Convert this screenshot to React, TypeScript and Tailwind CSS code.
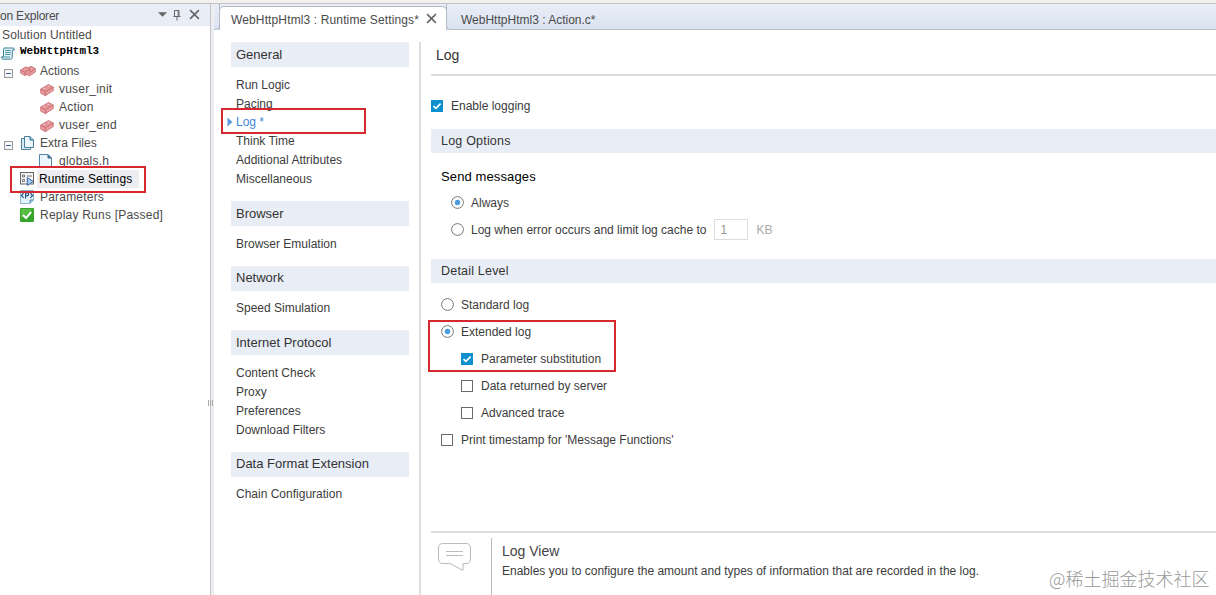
import React from "react";

const ROW = "flex h-[18px] items-center whitespace-nowrap text-[12px] text-[#4a4a4a]";

function Brick() {
  return (
    <svg width="14" height="14" viewBox="0 0 14 14" className="shrink-0">
      <path d="M0.5 6.2 L8.5 1.5 L13.3 4 L13.3 7.5 L5.4 12.7 L0.8 10.2 Z" fill="#ea9b9d" stroke="#c76f74" strokeWidth="0.8" />
      <path d="M0.6 6.3 L5.4 8.7 L13.2 4.1 M5.4 8.7 V12.6" fill="none" stroke="#c0636a" strokeWidth="0.8" />
      <ellipse cx="4.6" cy="5.4" rx="1.8" ry="1.1" fill="#f6c2c2" stroke="#c76f74" strokeWidth="0.6" />
      <ellipse cx="8.6" cy="3.4" rx="1.8" ry="1.1" fill="#f6c2c2" stroke="#c76f74" strokeWidth="0.6" />
    </svg>
  );
}

function Bricks() {
  return (
    <svg width="16" height="13" viewBox="0 0 16 13" className="shrink-0">
      <path d="M6 3.8 L11 1.2 L15.3 3.5 V7 L9.5 11 L6 9Z" fill="#ea9b9d" stroke="#c76f74" strokeWidth="0.8" />
      <path d="M0.5 5 L6 1.8 L10 4 V7.5 L5 10.6 L0.6 8.2Z" fill="#ea9b9d" stroke="#c76f74" strokeWidth="0.8" />
      <path d="M0.6 5.1 L5 7.3 L10 4.1 M5 7.3 V10.5 M10 7.5 L15 3.6" fill="none" stroke="#c0636a" strokeWidth="0.8" />
      <ellipse cx="4.6" cy="4.2" rx="1.6" ry="1" fill="#f6c2c2" stroke="#c76f74" strokeWidth="0.6" />
      <ellipse cx="11.4" cy="3.4" rx="1.5" ry="1" fill="#f6c2c2" stroke="#c76f74" strokeWidth="0.6" />
    </svg>
  );
}

function Minus() {
  return (
    <svg width="9" height="9" viewBox="0 0 9 9" className="mt-[4px] shrink-0">
      <rect x="0.5" y="0.5" width="8" height="8" fill="#f7f7f7" stroke="#999" />
      <path d="M2 4.5H7" stroke="#4661a8" />
    </svg>
  );
}

function Scroll() {
  return (
    <svg width="14" height="13" viewBox="0 0 14 13" className="shrink-0">
      <path d="M3 1 H12.2 Q13.5 1 13.3 3 H11.3 V10 Q11.2 12.2 9.5 12.2 H1.5 Q0.3 11.8 0.6 9.8 H2.5 V2.8 Q2.4 1.2 3.6 1" fill="#e2f2f5" stroke="#3c8397" />
      <path d="M4.2 3.5H9.6 M4.2 5.5H9.6 M4.2 7.5H9.6 M1 10H9" stroke="#4b94a6" />
    </svg>
  );
}

function Doc() {
  return (
    <svg width="13" height="14" viewBox="0 0 13 14" className="shrink-0">
      <path d="M0.5 0.5H9L12.5 4V13.5H0.5Z" fill="#eaf5fc" stroke="#5586a3" />
      <path d="M9 0.5V4H12.5" fill="#356f98" stroke="#39718f" />
    </svg>
  );
}

function Docs() {
  return (
    <svg width="13" height="14" viewBox="0 0 13 14" className="shrink-0">
      <path d="M3 2.5H0.5V13.5H9.5V12" fill="#d8ecf6" stroke="#4c809d" />
      <path d="M3.5 0.5H9L12.5 4V11.5H3.5Z" fill="#eaf5fc" stroke="#4c809d" />
      <path d="M9 0.5V4H12.5" fill="#8ec1dc" stroke="#39718f" />
    </svg>
  );
}

function RuntimeIcon() {
  return (
    <svg width="14" height="14" viewBox="0 0 14 14" className="shrink-0">
      <rect x="0.5" y="0.5" width="13" height="11.5" fill="#f4f4f4" stroke="#666" />
      <path d="M2.5 3H4.5V5H2.5Z M2.5 7.5H4.5V9.5H2.5Z" fill="#fff" stroke="#666" strokeWidth="0.9" />
      <path d="M7 4H12" stroke="#777" />
      <path d="M7.3 5.5 L13.2 9.5 L7.3 13.5Z" fill="#a9ccf1" stroke="#3567a8" />
    </svg>
  );
}

function ParamIcon() {
  return (
    <svg width="14" height="14" viewBox="0 0 14 14" className="shrink-0">
      <path d="M0.5 0.5H13.5V10L10 13.5H0.5Z" fill="#e3f1fa" stroke="#8ab6d0" />
      <path d="M3.6 3.2 L1.4 5.5 L3.6 7.8 M10.4 3.2 L12.6 5.5 L10.4 7.8 M5.6 8.6V3H7.2Q8.6 3.1 8.6 4.4Q8.5 5.8 7 5.8H5.6" fill="none" stroke="#174a7a" strokeWidth="1.1" />
      <path d="M10 13.3V10H13.3" fill="#95c4df" stroke="#5290b5" />
    </svg>
  );
}

function Passed() {
  return (
    <svg width="14" height="14" viewBox="0 0 14 14" className="shrink-0">
      <rect width="14" height="14" rx="1" fill="#35a52b" />
      <path d="M1 1H13L1 11Z" fill="#58bd43" />
      <path d="M3 7 L6 10 L11.2 4" fill="none" stroke="#fff" strokeWidth="2" />
    </svg>
  );
}

function Close({ size, color }: { size: number; color: string }) {
  return (
    <svg width={size} height={size} viewBox="0 0 10 10" className="shrink-0">
      <path d="M1 1L9 9M9 1L1 9" stroke={color} strokeWidth="1.4" />
    </svg>
  );
}

function Checkbox({ checked = false }: { checked?: boolean }) {
  return (
    <svg width="12" height="12" viewBox="0 0 12 12" className="shrink-0">
      {checked ? (
        <>
          <rect width="12" height="12" fill="#0e90cf" />
          <path d="M2.5 6.2L4.9 8.4L9.6 3.6" fill="none" stroke="#fff" strokeWidth="1.7" />
        </>
      ) : (
        <rect x="0.5" y="0.5" width="11" height="11" fill="#fff" stroke="#6b6b6b" />
      )}
    </svg>
  );
}

function Radio({ checked = false }: { checked?: boolean }) {
  return (
    <svg width="13" height="13" viewBox="0 0 13 13" className="shrink-0">
      <circle cx="6.5" cy="6.5" r="5.9" fill="#fff" stroke="#777" strokeWidth="1" />
      {checked && <circle cx="6.5" cy="6.5" r="2.7" fill="#4a9be0" />}
    </svg>
  );
}

function Explorer() {
  return (
    <aside className="relative w-[210px] shrink-0 overflow-hidden bg-white">
      <header className="flex h-[22px] items-center bg-[#e9edf6] text-[12px] text-[#4a4a4a]">
        <span className="mt-px w-[158px] whitespace-nowrap tracking-[-0.2px]">on Explorer</span>
        <svg width="9" height="5" viewBox="0 0 9 5" className="-mt-px"><path d="M0 0.3H9L4.5 4.8Z" fill="#666" /></svg>
        <svg width="8" height="11" viewBox="0 0 8 11" className="ml-[6px]">
          <path d="M1.5 6.5V0.5H6V6.5M0.5 6.5H7.5M4 6.5V10.5M5.2 1V6" fill="none" stroke="#666" />
        </svg>
        <span className="-mt-px ml-[8px]"><Close size={11} color="#666" /></span>
      </header>
      <div className={`${ROW} pl-[2px] tracking-[0.15px]`}>Solution Untitled</div>
      <div className={`${ROW} pl-px`}>
        <Scroll />
        <span className="ml-[5px] -mt-[3px] font-['Liberation_Mono',monospace] text-[11px] font-bold text-black">WebHttpHtml3</span>
      </div>
      <div className={`${ROW} pl-[4px]`}><Minus /><span className="w-[7px]" /><Bricks /><span className="ml-[4px]">Actions</span></div>
      {["vuser_init", "Action", "vuser_end"].map((t) => (
        <div key={t} className={`${ROW} pl-[40px]`}><span className="mt-[2px]"><Brick /></span><span className="ml-[5px] tracking-[0.2px]">{t}</span></div>
      ))}
      <div className={`${ROW} pl-[4px]`}><Minus /><span className="w-[8px]" /><Docs /><span className="ml-[6px]">Extra Files</span></div>
      <div className={`${ROW} pl-[39px]`}><Doc /><span className="ml-[7px] tracking-[0.25px]">globals.h</span></div>
      <div className={`${ROW} pl-[20px]`}><RuntimeIcon /><span className="ml-[3px] flex h-[18px] items-center bg-[#eeeef2] pl-[2px] pr-[7px] tracking-[0.12px] text-black">Runtime Settings</span></div>
      <div className={`${ROW} pl-[20px]`}><ParamIcon /><span className="ml-[6px] tracking-[0.2px]">Parameters</span></div>
      <div className={`${ROW} pl-[20px]`}><Passed /><span className="ml-[6px] tracking-[0.22px]">Replay Runs [Passed]</span></div>
      <div className="absolute left-[10px] top-[162px] h-[27px] w-[136px] border-2 border-[#d7282f]" />
    </aside>
  );
}

const GROUPS: { title: string; items: string[]; head: string; pad: string; gap: string }[] = [
  { title: "General", items: ["Run Logic", "Pacing", "Log *", "Think Time", "Additional Attributes", "Miscellaneous"], head: "pt-px", pad: "pt-[7px]", gap: "mb-[13px]" },
  { title: "Browser", items: ["Browser Emulation"], head: "pt-px", pad: "pt-[8px]", gap: "mb-[13px]" },
  { title: "Network", items: ["Speed Simulation"], head: "pb-px", pad: "pt-[7px]", gap: "mb-[13px]" },
  { title: "Internet Protocol", items: ["Content Check", "Proxy", "Preferences", "Download Filters"], head: "pt-px", pad: "pt-[8px]", gap: "mb-[13px]" },
  { title: "Data Format Extension", items: ["Chain Configuration"], head: "pb-px", pad: "pt-[7px]", gap: "" },
];

function Navigation() {
  return (
    <nav className="relative ml-[17px] mt-[12px] w-[178px] shrink-0">
      {GROUPS.map((g) => (
        <section key={g.title} className={g.gap}>
          <h2 className={`flex h-[25px] items-center bg-[#e9edf5] pl-[5px] text-[13px] text-[#333] ${g.head}`}>{g.title}</h2>
          <ul className={g.pad}>
            {g.items.map((t) => (
              <li key={t} className={t === "Log *" ? "-ml-[4px] flex h-[19px] items-center text-[12px] text-[#3e86d8]" : "flex h-[19px] items-center pl-[5px] text-[12px] text-[#3c3c3c]"}>
                {t === "Log *" && <svg width="6" height="10" viewBox="0 0 6 10" className="mr-[3px] mt-px"><path d="M0.5 0.5L5.5 5L0.5 9.5Z" fill="#5b9be0" /></svg>}
                <span className={t === "Run Logic" || t === "Pacing" ? "pt-[2px]" : ""}>{t}</span>
              </li>
            ))}
          </ul>
        </section>
      ))}
      <div className="absolute -left-[10px] top-[66px] h-[26px] w-[145px] border-2 border-[#d7282f]" />
    </nav>
  );
}

function Band({ children }: { children: string }) {
  return <h3 className="flex h-[24px] items-center bg-[#e9edf5] pl-[10px] text-[12.5px] tracking-[0.2px] text-[#333]">{children}</h3>;
}

const OPT = "flex h-[27px] items-center gap-[7px] whitespace-nowrap";

function LogPanel() {
  return (
    <section className="relative ml-[10px] flex min-w-0 flex-1 flex-col text-[12px] text-[#3c3c3c]">
      <h1 className="flex h-[46px] items-center border-b-2 border-[#dedede] pl-[5px] pt-[6px] text-[14px] text-[#333]">Log</h1>
      <label className="flex h-[53px] items-center gap-[8px] pt-[6px]"><Checkbox checked /><span>Enable logging</span></label>
      <Band>Log Options</Band>
      <h4 className="mt-[14px] flex h-[20px] items-center pl-[10px] text-[13px] tracking-[0.12px] text-black">Send messages</h4>
      <div className="mt-[2px] pl-[20px]">
        <label className={OPT}><Radio checked />Always</label>
        <label className={OPT}>
          <Radio />Log when error occurs and limit log cache to
          <span className="ml-px flex h-[21px] w-[34px] items-center border border-[#ddd] pl-[5px] text-[#999]">1</span>
          <span className="ml-px text-[#aaa]">KB</span>
        </label>
      </div>
      <div className="mt-[16px]"><Band>Detail Level</Band></div>
      <div className="mt-[8px] pl-[10px]">
        <label className={OPT}><Radio />Standard log</label>
        <label className={OPT}><Radio checked />Extended log</label>
        <div className="pl-[20px]">
          <label className={OPT}><Checkbox checked /><span className="ml-px">Parameter substitution</span></label>
          <label className={OPT}><Checkbox /><span className="ml-px">Data returned by server</span></label>
          <label className={OPT}><Checkbox /><span className="ml-px">Advanced trace</span></label>
        </div>
        <label className={OPT}><Checkbox /><span className="ml-px">Print timestamp for 'Message Functions'</span></label>
      </div>
      <footer className="mt-auto flex h-[64px] border-t-2 border-[#dedede]">
        <svg width="34" height="30" viewBox="0 0 34 30" className="ml-[7px] mt-[10px]">
          <path d="M5 0.5H28Q32.5 0.5 32.5 5V16Q32.5 20.5 28 20.5H25V27.5L12 20.5H5Q0.5 20.5 0.5 16V5Q0.5 0.5 5 0.5Z" fill="#fff" stroke="#bbb" />
          <path d="M8 8.5H25M8 12.5H25" stroke="#bbb" />
        </svg>
        <div className="ml-[19px] mt-[5px] whitespace-nowrap border-l border-[#bbb] pl-[10px] pt-[3px]">
          <h4 className="text-[14px] leading-[20px] text-[#444]">Log View</h4>
          <p className="mt-px text-[12px] leading-[18px]">Enables you to configure the amount and types of information that are recorded in the log.</p>
        </div>
      </footer>
      <div className="absolute -left-[3px] top-[290px] h-[52px] w-[188px] border-2 border-[#d7282f]" />
    </section>
  );
}

export default function App() {
  return (
    <div className="relative flex h-[595px] w-[1216px] flex-col overflow-hidden bg-white font-['Liberation_Sans',Arial,sans-serif]">
      <div className="h-[4px] shrink-0 border-b border-[#bfc2c7] bg-[#f3f0ee]" />
      <div className="flex min-h-0 flex-1">
        <Explorer />
        <div className="flex w-[4px] shrink-0 items-center border-l border-[#c3c5ca] bg-[#eceef2]">
          <svg width="6" height="6" viewBox="0 0 6 6" className="relative -left-[3px] top-[103px] shrink-0"><path d="M0.5 0V6M2.5 0V6M4.5 0V6" stroke="#aaa" /></svg>
        </div>
        <main className="flex min-w-0 flex-1 flex-col bg-white">
          <div className="flex h-[26px] shrink-0 bg-linear-to-b from-[#e9eef7] to-[#d9e3f1]">
            <div className="w-[6px] rounded-br-[5px] border-b border-r border-[#b6bcc6]" />
            <div className="-ml-px mt-[2px] flex w-[228px] items-center rounded-t-[5px] border-x border-t border-[#b6bcc6] bg-white pl-[11px] text-[12px] text-[#4a4a4a]">
              <span className="mt-[2px] w-[195px] whitespace-nowrap tracking-[0.13px]">WebHttpHtml3 : Runtime Settings*</span>
              <Close size={11} color="#666" />
            </div>
            <div className="-ml-px flex flex-1 items-center rounded-bl-[5px] border-b border-l border-[#b6bcc6] pl-[14px] pt-[6px] text-[12px] text-[#4a4a4a]">WebHttpHtml3 : Action.c*</div>
          </div>
          <div className="flex min-h-0 flex-1">
            <Navigation />
            <div className="ml-[10px] mt-[12px] w-[2px] shrink-0 bg-[#dedede]" />
            <LogPanel />
          </div>
        </main>
      </div>
      <div className="absolute left-[1049px] top-[567px] whitespace-nowrap font-['Noto_Sans_CJK_SC',sans-serif] text-[18px] font-light leading-[22px] text-[#999]">@稀土掘金技术社区</div>
    </div>
  );
}
